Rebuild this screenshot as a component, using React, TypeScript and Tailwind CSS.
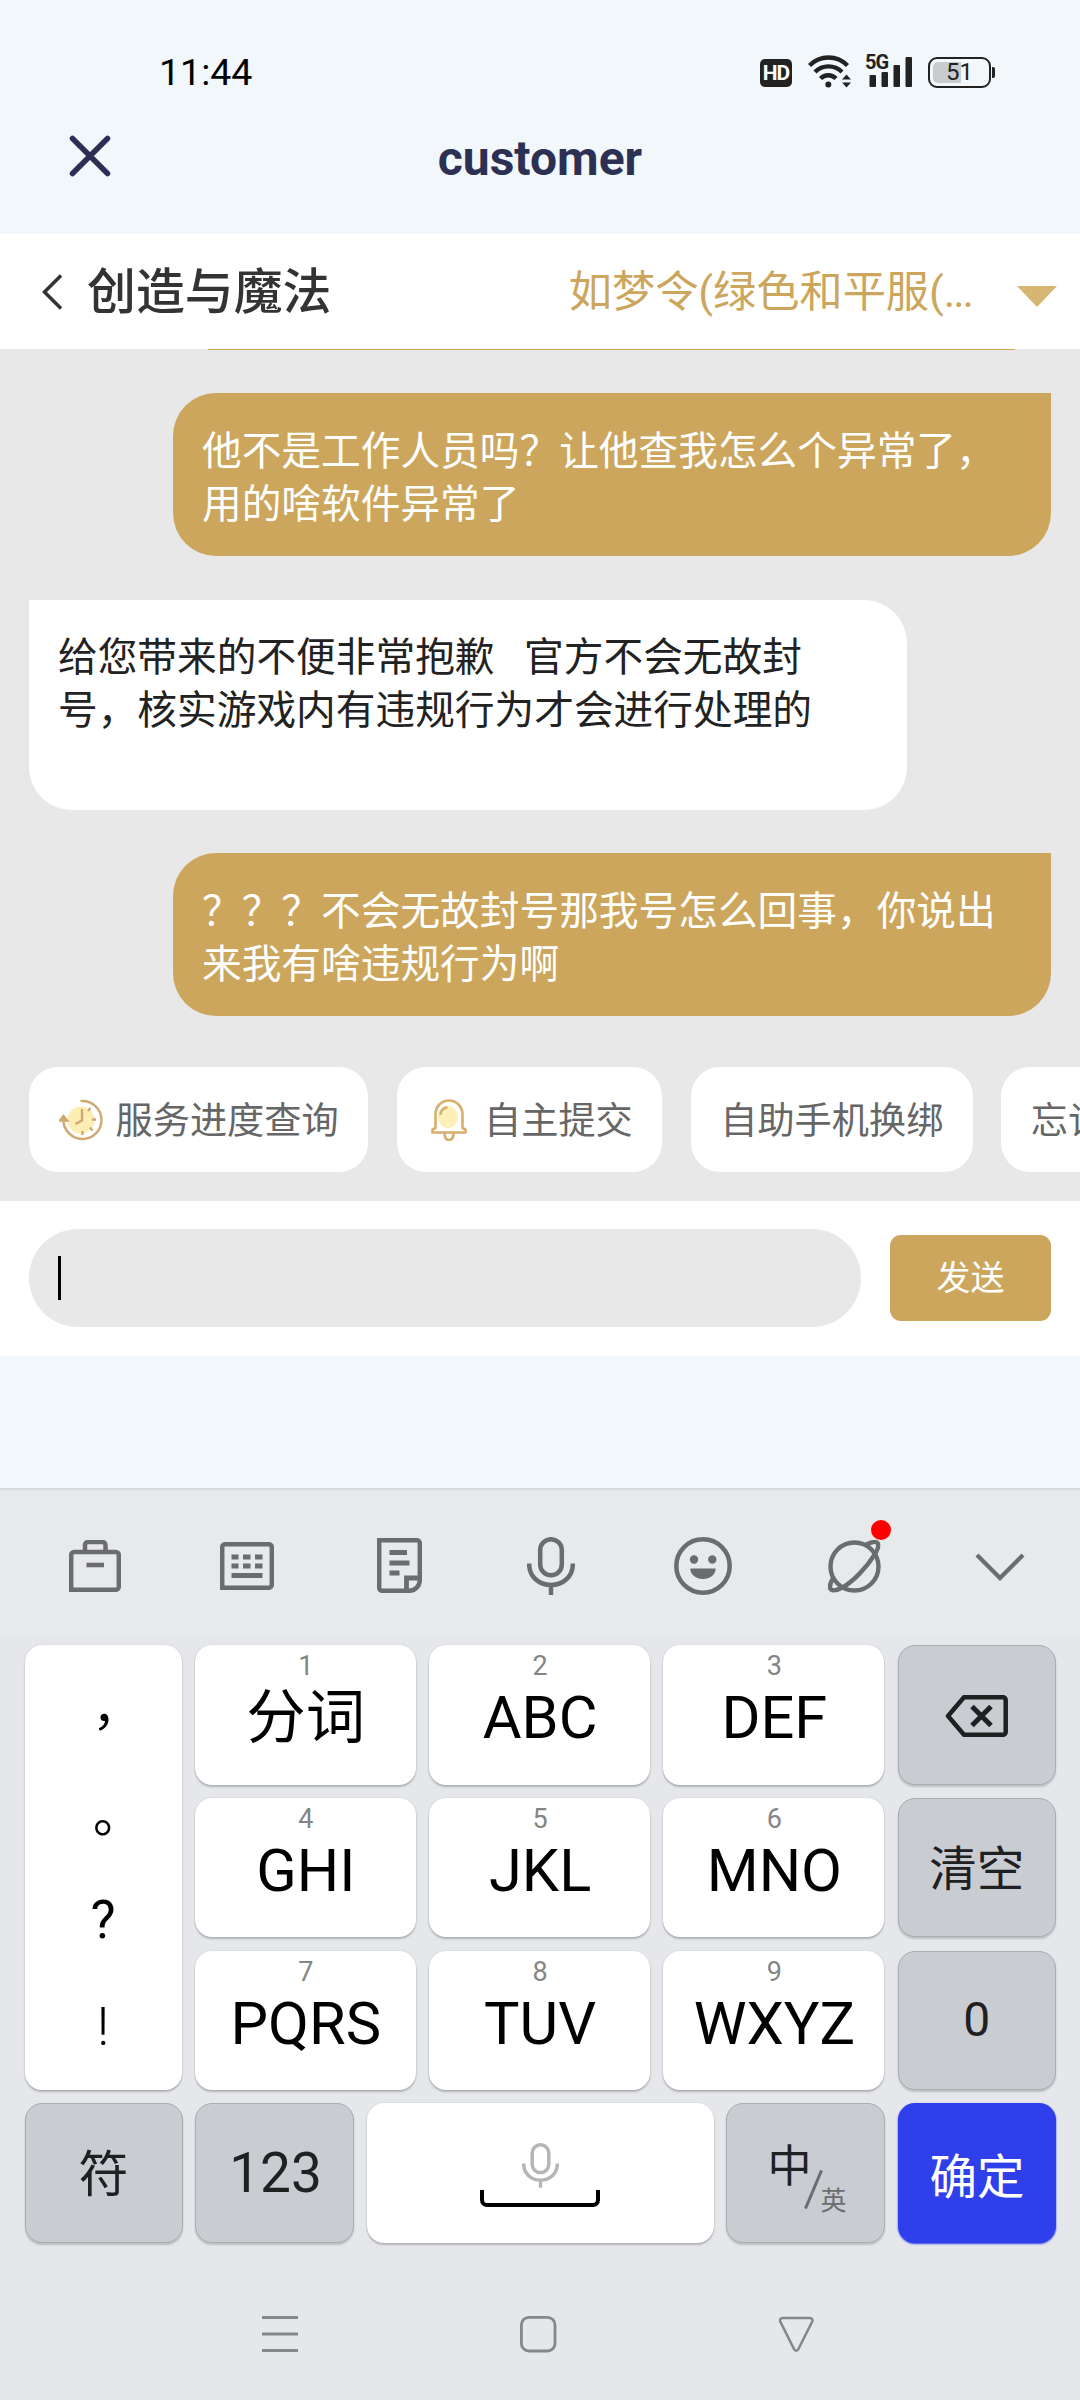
import { ReactNode } from 'react';
import clsx from 'clsx';

interface Message {
  id: number;
  mine: boolean;
  text: string;
}

const messages: Message[] = [
  { id: 1, mine: true, text: '他不是工作人员吗？让他查我怎么个异常了，\n用的啥软件异常了' },
  { id: 2, mine: false, text: '给您带来的不便非常抱歉   官方不会无故封\n号，核实游戏内有违规行为才会进行处理的' },
  { id: 3, mine: true, text: '？？？不会无故封号那我号怎么回事，你说出\n来我有啥违规行为啊' },
];

const letterKeys = [
  { num: '1', label: '分词', place: 'col-start-2 row-start-1' },
  { num: '2', label: 'ABC', place: 'col-start-3 row-start-1' },
  { num: '3', label: 'DEF', place: 'col-start-4 row-start-1' },
  { num: '4', label: 'GHI', place: 'col-start-2 row-start-2' },
  { num: '5', label: 'JKL', place: 'col-start-3 row-start-2' },
  { num: '6', label: 'MNO', place: 'col-start-4 row-start-2' },
  { num: '7', label: 'PQRS', place: 'col-start-2 row-start-3' },
  { num: '8', label: 'TUV', place: 'col-start-3 row-start-3' },
  { num: '9', label: 'WXYZ', place: 'col-start-4 row-start-3' },
];

function WifiIcon() {
  return (
    <svg className="h-[34px] w-[44px]" viewBox="0 0 44 34" fill="none" stroke="#222" strokeWidth="4.4">
      <path d="M1.5 11.5a26.5 26.5 0 0 1 38 0" />
      <path d="M7 18a19 19 0 0 1 27 0" />
      <path d="M12.5 24.5a11 11 0 0 1 15.5 0" />
      <circle cx="20.3" cy="30.5" r="3" fill="#222" stroke="none" />
      <path d="M34 25.5l4.5-5 4.5 5zM34 28.5l4.5 5 4.5-5z" fill="#222" stroke="none" />
    </svg>
  );
}

function SignalIcon() {
  return (
    <div className="relative h-[33px] w-[47px]">
      <svg className="h-full w-full" viewBox="0 0 47 33" fill="#222">
        <rect x="3.5" y="21" width="6.5" height="12" rx="1" />
        <rect x="15.5" y="18" width="6.5" height="15" rx="1" />
        <rect x="27.5" y="11" width="6.5" height="22" rx="1" />
        <rect x="39.5" y="3" width="6.5" height="30" rx="1" />
      </svg>
      <span className="absolute -left-px top-0 text-[20px] font-bold leading-[16px] tracking-[-1px] text-[#222]">5G</span>
    </div>
  );
}

function BatteryIcon() {
  return (
    <div className="flex items-center">
      <div className="relative h-[31px] w-[63px] rounded-[9px] border-[2.5px] border-[#222] p-[3px]">
        <div className="h-full w-[28px] rounded-l-[5px] bg-[#c9cccf]" />
        <span className="absolute inset-0 text-center text-[24px] leading-[27px] text-[#222]">51</span>
      </div>
      <div className="ml-[1px] h-[11px] w-[3px] rounded-r-[2px] bg-[#222]" />
    </div>
  );
}

function StatusBar() {
  return (
    <div className="flex h-[110px] items-start justify-between pl-[159px] pr-[85px] pt-[54px]">
      <div className="text-[37.5px] leading-[37px] text-black">11:44</div>
      <div className="flex items-start">
        <div className="mt-[5px] flex h-[28px] w-[32px] items-center justify-center rounded-[5px] bg-[#222] text-[21px] font-bold leading-none tracking-[-1px] text-white">
          HD
        </div>
        <div className="ml-[16px]"><WifiIcon /></div>
        <div className="ml-[14px]"><SignalIcon /></div>
        <div className="ml-[15px] mt-[3px]"><BatteryIcon /></div>
      </div>
    </div>
  );
}

function TitleBar() {
  return (
    <div className="grid h-[124px] grid-cols-3 items-start px-[68px]">
      <svg className="mt-[24px] h-[44px] w-[44px]" viewBox="0 0 44 44" stroke="#2c2e56" strokeWidth="5.5" strokeLinecap="round">
        <path d="M4.5 4.5l35 35M39.5 4.5l-35 35" />
      </svg>
      <h1 className="mt-[21px] text-center text-[48px] font-bold leading-[56px] text-[#2c3154]">customer</h1>
    </div>
  );
}

function ChatHeader() {
  return (
    <div className="flex h-[115px] items-center bg-white pl-[40px] pr-[23px]">
      <svg className="h-[38px] w-[24px]" viewBox="0 0 24 38" fill="none" stroke="#333" strokeWidth="3.5">
        <path d="M21 2.5L4.5 19 21 35.5" />
      </svg>
      <div className="ml-[23px] mt-[2px] text-[48.9px] font-medium leading-[60px] text-[#333]">创造与魔法</div>
      <div className="ml-auto mt-[2px] text-[43.2px] leading-[60px] text-[#cba65c]">
        如梦令(绿色和平服(<span className="tracking-[-2px]">...</span>
      </div>
      <svg className="ml-[45px] mt-[9px] h-[21px] w-[40px]" viewBox="0 0 40 21" fill="#d6b672">
        <path d="M0 0h40L20 21z" />
      </svg>
    </div>
  );
}

function Bubble({ mine, text }: Message) {
  return (
    <div
      className={clsx(
        'w-[878px] whitespace-pre px-[29px] pt-[31.5px] text-[39.7px] leading-[53.3px]',
        mine
          ? 'h-[163px] self-end rounded-[43px] rounded-tr-none bg-[#cba65c] text-white'
          : 'h-[210px] self-start rounded-[43px] rounded-tl-none bg-white text-[#222]'
      )}
    >
      {text}
    </div>
  );
}

function ClockIcon() {
  return (
    <svg className="mr-[13px] h-[42px] w-[44px]" viewBox="0 0 44 42" fill="none" stroke="#cfa872" strokeWidth="2.4">
      <circle cx="22" cy="21" r="13.5" fill="#fdeeb5" stroke="none" />
      <path d="M22.5 2A19 19 0 1 1 4.5 20" strokeLinecap="round" />
      <path d="M1 21.5l3.5-4.5L8 21.5z" fill="#cfa872" />
      <path d="M23 10v11.5l-6.5 3.5M31.5 9l-2.5 3M37 20.5h-4M33.5 31.5l-2.5-3M23.5 36v-4" />
    </svg>
  );
}

function BellIcon() {
  return (
    <svg className="ml-[5px] mr-[17px] h-[42px] w-[36px]" viewBox="0 0 36 42" fill="none" stroke="#d8ae6c" strokeWidth="2.6">
      <ellipse cx="17" cy="18" rx="10" ry="11" fill="#fdefb8" stroke="none" />
      <path d="M4.5 29V15a13.5 13.5 0 0 1 27 0v14l3 1.5v3h-33v-3z" strokeLinejoin="round" />
      <path d="M9.5 16c0-4 3-7 7-8M13.5 34c0 4 1.5 7 4.5 7s4.5-3 4.5-7" />
    </svg>
  );
}

function Chip({ icon, children }: { icon?: ReactNode; children: ReactNode }) {
  return (
    <button className="flex h-[105px] shrink-0 items-center whitespace-nowrap rounded-[29px] bg-white px-[29.5px] text-[37.2px] leading-[50px] text-[#666]">
      {icon}
      <span className="mt-[3px]">{children}</span>
    </button>
  );
}

function Conversation() {
  return (
    <div className="flex h-[851.5px] flex-col overflow-hidden bg-[#e8e8e8] px-[29px]">
      {/* bottom edge of the message scrolled out above */}
      <div className="ml-[179px] mr-[36px] h-[1px] shrink-0 bg-[#cba65c]" />
      <div className="mt-[43px] flex flex-col gap-[43.7px]">
        {messages.map((m) => (
          <Bubble key={m.id} {...m} />
        ))}
      </div>
      <div className="mt-[51px] flex gap-[28.4px]">
        <Chip icon={<ClockIcon />}>服务进度查询</Chip>
        <Chip icon={<BellIcon />}>自主提交</Chip>
        <Chip>自助手机换绑</Chip>
        <Chip>忘记密码</Chip>
      </div>
    </div>
  );
}

function InputBar() {
  return (
    <div className="flex h-[155.5px] items-center bg-white px-[29px]">
      <div className="flex h-[98px] flex-1 items-center rounded-full bg-[#e8e8e8] pl-[29px]">
        <div className="h-[44px] w-[3px] bg-black" />
      </div>
      <button className="ml-[29px] h-[86px] w-[161px] rounded-[11px] bg-[#cba65c] text-[34px] leading-[50px] text-white">
        发送
      </button>
    </div>
  );
}

function MicIcon({ className }: { className: string }) {
  return (
    <svg className={className} viewBox="0 0 48 58" fill="none" stroke="currentColor" strokeWidth="4.5">
      <rect x="13.2" y="2.2" width="21.6" height="36" rx="10.8" />
      <path d="M2.2 26.5v1c0 12 9.8 20.5 21.8 20.5s21.8-8.5 21.8-20.5v-1M24 48v10" />
    </svg>
  );
}

function Toolbar() {
  return (
    <div className="relative flex h-[147px] items-start border-t-2 border-[#d8dadc] bg-[#e8e9eb] text-[#6b6c6e]">
      <svg className="ml-[69px] mt-[50px] h-[52px] w-[52px]" viewBox="0 0 52 52" fill="none" stroke="currentColor" strokeWidth="4.5">
        <path d="M2.2 49.8V15a3 3 0 0 1 3-3h41.6a3 3 0 0 1 3 3v31.8a3 3 0 0 1-3 3z" />
        <path d="M16 12V5a3 3 0 0 1 3-3h14.5a3 3 0 0 1 3 3v7M17.5 25H35" />
      </svg>
      <svg className="ml-[99px] mt-[52px] h-[48px] w-[54px]" viewBox="0 0 54 48" fill="none" stroke="currentColor" strokeWidth="4.5">
        <path d="M2.2 45.8V5.2a3 3 0 0 1 3-3h43.6a3 3 0 0 1 3 3v37.6a3 3 0 0 1-3 3z" />
        <path d="M11.5 15h7M23 15h7.5M35 15h7.5M11.5 24h7M23 24h7.5M35 24h7.5M11.5 33.5h31" strokeWidth="4.8" />
      </svg>
      <svg className="ml-[103px] mt-[48px] h-[55px] w-[45px]" viewBox="0 0 45 55" fill="none" stroke="currentColor" strokeWidth="4.5">
        <path d="M2.2 2.2h37.6a3 3 0 0 1 3 3V42c0 6-4.5 10.8-10.5 10.8H5.2a3 3 0 0 1-3-3z" />
        <path d="M29.5 52.5V40h13M12.5 14.5h17.5M12.5 25h20M12.5 35h10" strokeWidth="4.8" />
      </svg>
      <MicIcon className="ml-[105px] mt-[47px] h-[58px] w-[48px]" />
      <svg className="ml-[99px] mt-[47px] h-[58px] w-[58px]" viewBox="0 0 58 58" fill="none">
        <circle cx="29" cy="29" r="26.7" stroke="currentColor" strokeWidth="4.5" />
        <circle cx="20" cy="22.5" r="4.2" fill="currentColor" />
        <circle cx="38.3" cy="22.5" r="4.2" fill="currentColor" />
        <path d="M16.3 31.5h25.4c0 6-5.5 10.5-12.7 10.5s-12.7-4.5-12.7-10.5z" fill="currentColor" />
      </svg>
      <div className="relative ml-[96px] mt-[50px]">
        <svg className="h-[53px] w-[53px]" viewBox="0 0 53 53" fill="none" stroke="currentColor" strokeWidth="4.4">
          <circle cx="26.5" cy="26.5" r="24" />
          <path d="M38.5 4.5C43 2 48 1 49.5 3c1.5 2.5 0 7-2.5 11C39 27 25 42 13.5 48c-4 2-8.5 3-10.5 1.5-2-2-.5-7 2-11" />
        </svg>
        <div className="absolute left-[42.5px] top-[-20px] h-[20px] w-[20px] rounded-full bg-[#ff0000]" />
      </div>
      <svg className="ml-[94px] mt-[63px] h-[28px] w-[50px]" viewBox="0 0 50 28" fill="none" stroke="currentColor" strokeWidth="4.2">
        <path d="M2 2l23 23L48 2" />
      </svg>
    </div>
  );
}

function Key({ tone = 'white', className, children }: { tone?: 'white' | 'gray' | 'blue'; className?: string; children: ReactNode }) {
  return (
    <div
      className={clsx(
        'flex items-center justify-center rounded-[17px] leading-none',
        tone === 'white' && 'bg-white text-black shadow-[0_2px_2px_rgba(0,0,0,0.22),0_0_2px_rgba(0,0,0,0.12)]',
        tone === 'gray' && 'border border-[#a9acb1] bg-[#c9ccd1] text-[#1f2022] shadow-[0_2px_2px_rgba(0,0,0,0.18)]',
        tone === 'blue' && 'bg-[#2f3feb] text-white shadow-[0_1px_2px_#2f3feb]',
        className
      )}
    >
      {children}
    </div>
  );
}

function Keyboard() {
  return (
    <div className="h-[765px] bg-[#e5e7eb] pl-[24.5px] pr-[24px] pt-[10px]">
      <div className="grid grid-cols-[157px_221px_221px_221px_158px] grid-rows-[139.5px_139.5px_139.5px] gap-[13.3px]">
        <Key className="col-start-1 row-span-3 row-start-1 flex-col pb-[17px] pt-[11px] text-[50px]">
          <span className="h-[107px] translate-x-[14px] leading-[115px]">，</span>
          <span className="h-[107px] translate-x-[15px] leading-[115px]">。</span>
          <span className="h-[107px] text-[53px] leading-[110px]">?</span>
          <span className="h-[107px] text-[54px] font-light leading-[109px]">!</span>
        </Key>
        {letterKeys.map((k) => (
          <Key key={k.num} className={clsx('flex-col pl-[1px]', k.place)}>
            <span className="mt-[-16px] text-[27px] leading-[32px] text-[#858585]">{k.num}</span>
            <span className="mb-[12px] mt-[3px] text-[59.5px] leading-[66px]">{k.label}</span>
          </Key>
        ))}
        <Key tone="gray" className="col-start-5 row-start-1 pt-[2px]">
          <svg className="h-[42px] w-[63px]" viewBox="0 0 63 42" fill="none" stroke="currentColor" strokeWidth="4.5">
            <path d="M19 2.2h39a2.7 2.7 0 0 1 2.7 2.7v32.2a2.7 2.7 0 0 1-2.7 2.7H19L3 21z" strokeLinejoin="round" />
            <path d="M27 11.5l19 19M46 11.5l-19 19" strokeWidth="5" />
          </svg>
        </Key>
        <Key tone="gray" className="col-start-5 row-start-2 pt-[6px] text-[47.5px]">清空</Key>
        <Key tone="gray" className="col-start-5 row-start-3 text-[48px]">0</Key>
      </div>
      <div className="mt-[13.3px] grid h-[140px] grid-cols-[158px_158.5px_347px_158.5px_158.5px] gap-[12.8px]">
        <Key tone="gray" className="pt-[3px] text-[50px]">符</Key>
        <Key tone="gray" className="pl-[2px] pt-[1px] text-[55px]">123</Key>
        <Key className="flex-col pt-[4px]">
          <MicIcon className="h-[45px] w-[37px] text-[#b5b5b5]" />
          <div className="mt-[2px] h-[17px] w-[120px] rounded-b-[7px] border-x-[4.5px] border-b-[4.5px] border-black" />
        </Key>
        <Key tone="gray" className="relative">
          <span className="absolute left-[40px] top-[38px] text-[44px] leading-[50px]">中</span>
          <svg className="absolute left-[76.5px] top-[66px] h-[39px] w-[19px]" viewBox="0 0 19 39" stroke="#6b6d70" strokeWidth="3">
            <path d="M1.5 38.5L17.5 0.5" />
          </svg>
          <span className="absolute left-[93px] top-[81px] text-[26px] leading-[32px] text-[#6b6d70]">英</span>
        </Key>
        <Key tone="blue" className="pt-[11px] text-[47.5px]">确定</Key>
      </div>
      <div className="mt-[72px] flex items-center pl-[236px]">
        <svg className="h-[38px] w-[38px]" viewBox="0 0 38 38" stroke="#85878b" strokeWidth="3">
          <path d="M1 2.5h36M1 19h36M1 35.5h36" />
        </svg>
        <svg className="ml-[220px] h-[38px] w-[38px]" viewBox="0 0 38 38" fill="none" stroke="#85878b" strokeWidth="2.8">
          <rect x="2.4" y="2.4" width="33.6" height="33.6" rx="7.5" />
        </svg>
        <svg className="ml-[220px] h-[38px] w-[38px]" viewBox="0 0 38 38" fill="none" stroke="#85878b" strokeWidth="2.5">
          <path d="M5.5 3h27.5a2.5 2.5 0 0 1 2.2 3.7L21.3 34.3a2.3 2.3 0 0 1-4.2 0L3.3 6.7A2.5 2.5 0 0 1 5.5 3z" />
        </svg>
      </div>
    </div>
  );
}

export default function App() {
  return (
    <div
      lang="zh-CN"
      className="flex h-[2400px] w-[1080px] flex-col overflow-hidden bg-[#f1f7fa] font-[Roboto,'Noto_Sans_CJK_SC',sans-serif]"
    >
      <StatusBar />
      <TitleBar />
      <ChatHeader />
      <Conversation />
      <InputBar />
      <div className="mt-auto">
        <Toolbar />
        <Keyboard />
      </div>
    </div>
  );
}
